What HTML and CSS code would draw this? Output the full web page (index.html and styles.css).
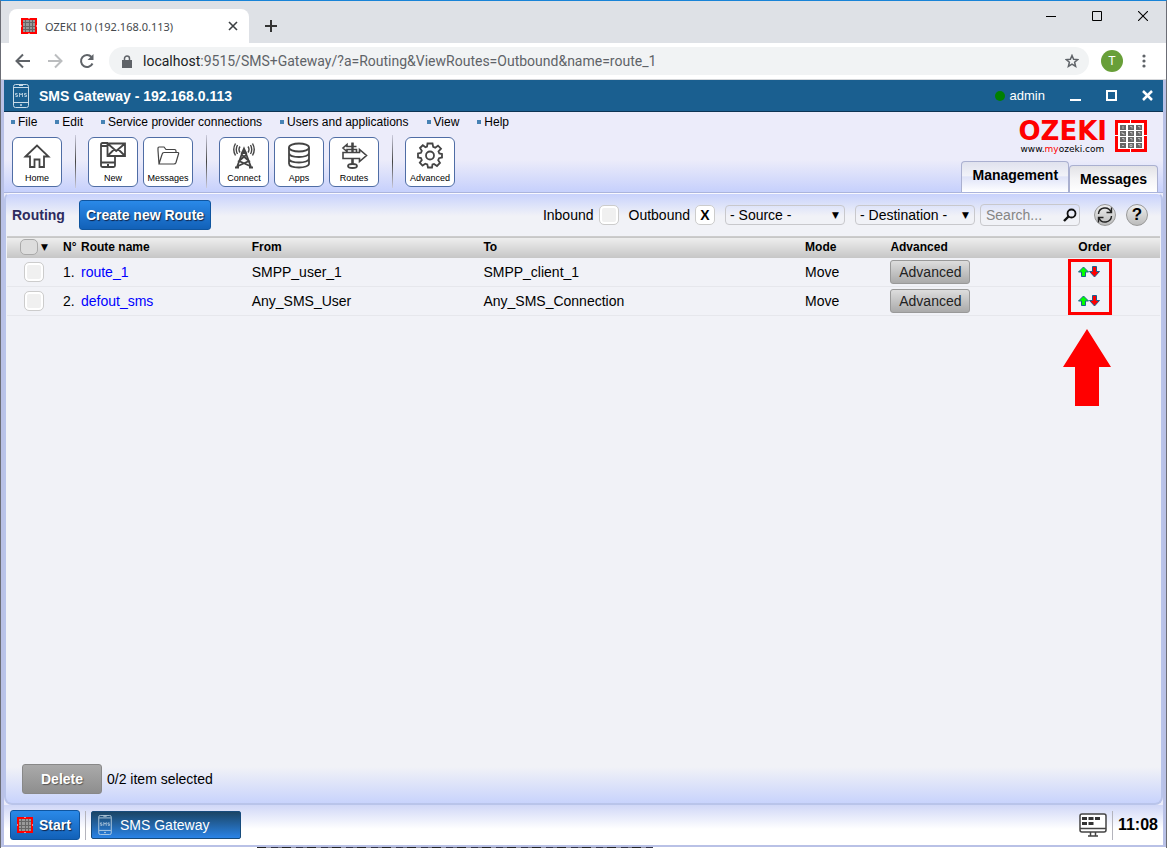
FILE: index.html
```
<!DOCTYPE html>
<html lang="en">
<head>
<meta charset="utf-8">
<title>OZEKI 10 (192.168.0.113)</title>
<link rel="stylesheet" href="styles.css">
</head>
<body>
<svg class="defs" aria-hidden="true">
  <symbol id="grid" viewBox="0 0 32 32">
    <path d="M0 0H32V32H0Z" fill="#fff"/>
    <path d="M0 0H15V3H3V15H0ZM16 0H32V15H29V3H16ZM0 16H3V29H15V32H0ZM29 16H32V32H16V29H29Z" fill="#f00"/>
    <path d="M5 5h6v5H5zM13 5h6v5h-6zM21 5h6v5h-6zM5 11h6v5H5zM13 11h6v5h-6zM21 11h6v5h-6zM5 17h6v5H5zM13 17h6v5h-6zM21 17h6v5h-6zM5 23h6v5H5zM13 23h6v5h-6zM21 23h6v5h-6z" fill="#666"/>
    <path d="M8 6v3M15 6.500h2v2M23 6.500h2v2M7 12v1.500h2v1.500M15 12.500h2v2M23 12.500h2v2M7 18.500h2v2M15 18.500h2v2M23 18.500h2v2M7 25.500h2M15 24.500h2v2h-2zM23 24.500h2v2" fill="none" stroke="#ccc" stroke-width=".8"/>
  </symbol>
  <symbol id="favicon" viewBox="0 0 16 16">
    <path d="M0 0H16V16H0Z" fill="#f00"/>
    <path d="M2 2H14V14H2Z" fill="#999"/>
    <path d="M8 0V1M8 15V16M0 8H1M15 8H16" stroke="#fff"/>
    <path d="M4.500 2V14M8.500 2V14M11.500 2V14M2 4.500H14M2 8.500H14M2 11.500H14" stroke="#666"/>
  </symbol>
  <symbol id="phone" viewBox="0 0 16 24">
    <rect x=".5" y=".5" width="15" height="23" rx="2" fill="none" stroke="#c8dbe8"/>
    <path d="M1 3.500H15M1 18.500H15M6 1.500h4" stroke="#c8dbe8"/>
    <path d="M4.500 9.500H2.500v1.500h2v1.500h-2M6.500 13v-4l1.500 2 1.500-2v4M13.500 9.500h-2v1.500h2v1.500h-2" fill="none" stroke="#c8dbe8" stroke-width=".8"/>
    <circle cx="8" cy="21" r="1" fill="#c8dbe8"/>
  </symbol>
  <symbol id="updown" viewBox="0 0 22 12">
    <path d="M5.500 1 10.500 6H7.500V10.500H3.500V6H.5Z" fill="#0f0" stroke="#1b5f91"/>
    <path d="M14.500 .5H18.500V5.500H21.500L16.500 11 11.500 5.500H14.500Z" fill="#f00" stroke="#1b5f91"/>
  </symbol>
</svg>

<div class="browser">
  <header class="tabstrip">
    <div class="tab">
      <svg class="i16"><use href="#favicon"/></svg>
      <span class="tab-title">OZEKI 10 (192.168.0.113)</span>
      <button class="bare" aria-label="Close tab"><svg width="10" height="10" viewBox="0 0 10 10"><path d="M1 1 9 9M9 1 1 9" stroke="#3c4043" stroke-width="1.600"/></svg></button>
    </div>
    <button class="bare newtab" aria-label="New tab"><svg width="12" height="12" viewBox="0 0 12 12"><path d="M6 0V12M0 6H12" stroke="#333" stroke-width="2"/></svg></button>
    <div class="wincontrols">
      <button class="bare" aria-label="Minimize"><svg width="10" height="10" viewBox="0 0 10 10"><path d="M0 5.500H10" stroke="#000"/></svg></button>
      <button class="bare" aria-label="Maximize"><svg width="10" height="10" viewBox="0 0 10 10"><path d="M.5 .5H9.500V9.500H.5Z" fill="none" stroke="#000"/></svg></button>
      <button class="bare" aria-label="Close"><svg width="10" height="10" viewBox="0 0 10 10"><path d="M0 0 10 10M10 0 0 10" stroke="#000" stroke-width="1.100"/></svg></button>
    </div>
  </header>

  <nav class="navbar">
    <button class="bare" aria-label="Back"><svg width="16" height="16" viewBox="0 0 16 16"><path d="M15 8H2M8 1.500 1.500 8 8 14.500" fill="none" stroke="#5f6368" stroke-width="2"/></svg></button>
    <button class="bare" aria-label="Forward"><svg width="16" height="16" viewBox="0 0 16 16"><path d="M1 8H14M8 1.500 14.500 8 8 14.500" fill="none" stroke="#bbbdbf" stroke-width="2"/></svg></button>
    <button class="bare" aria-label="Reload"><svg width="16" height="16" viewBox="0 0 16 16"><path d="M13.500 10.500A6 6 0 1 1 12.500 4" fill="none" stroke="#5f6368" stroke-width="2"/><path d="M14.500 1V7H8.500Z" fill="#5f6368"/></svg></button>
    <div class="address">
      <svg width="10" height="13" viewBox="0 0 10 13"><path d="M0 5h10v8H0z" fill="#5f6368"/><path d="M2.500 6V3.500a2.500 2.500 0 0 1 5 0V6" fill="none" stroke="#5f6368" stroke-width="1.500"/></svg>
      <span class="url"><b>localhost</b>:9515/SMS+Gateway/?a=Routing&amp;ViewRoutes=Outbound&amp;name=route_1</span>
      <button class="bare" aria-label="Bookmark"><svg width="14" height="14" viewBox="0 0 14 14"><path d="M7 1.500 8.600 5.300 12.800 5.600 9.600 8.300 10.600 12.400 7 10.200 3.400 12.400 4.400 8.300 1.200 5.600 5.400 5.300Z" fill="none" stroke="#5f6368" stroke-width="1.500"/></svg></button>
    </div>
    <button class="avatar">T</button>
    <button class="bare" aria-label="Menu"><svg width="4" height="14" viewBox="0 0 4 14"><g fill="#5f6368"><circle cx="2" cy="2" r="1.600"/><circle cx="2" cy="7" r="1.600"/><circle cx="2" cy="12" r="1.600"/></g></svg></button>
  </nav>

  <main class="app">
    <header class="titlebar">
      <svg class="i24"><use href="#phone"/></svg>
      <h1>SMS Gateway - 192.168.0.113</h1>
      <span class="user"><i class="dot"></i>admin</span>
      <button class="bare" aria-label="Minimize window"><svg width="11" height="11" viewBox="0 0 11 11"><path d="M0 10H11" stroke="#fff" stroke-width="2"/></svg></button>
      <button class="bare" aria-label="Maximize window"><svg width="11" height="11" viewBox="0 0 11 11"><path d="M1 1H10V10H1Z" fill="none" stroke="#fff" stroke-width="2"/></svg></button>
      <button class="bare" aria-label="Close window"><svg width="11" height="11" viewBox="0 0 11 11"><path d="M1 1 10 10M10 1 1 10" stroke="#fff" stroke-width="2.500"/></svg></button>
    </header>

    <section class="ribbon">
      <div class="ribbon-left">
        <nav class="menu">
          <a href="#">File</a><a href="#">Edit</a><a href="#">Service provider connections</a><a href="#">Users and applications</a><a href="#">View</a><a href="#">Help</a>
        </nav>
        <div class="tools">
          <button class="tool"><svg viewBox="0 0 28 28"><path d="M2.500 15.500 14 4.500 25.500 15.500H21V26H16.500V18.500H11.500V26H7V15.500Z"/></svg>Home</button>
          <i class="sep"></i>
          <button class="tool"><svg viewBox="0 0 28 28"><path d="M9 2H3.500Q2 2 2 3.500V24.500Q2 26 3.500 26H14.500Q16 26 16 24.500V16M2 5H8M2 21.500H16M8 24h2M8.500 2.500H26V15H8.500ZM8.500 2.500 17.200 10 26 2.500M8.500 15 15 8.500M26 15 19.500 8.500"/></svg>New</button>
          <button class="tool"><svg class="thin" viewBox="0 0 28 28"><path d="M5 23 4 9.500V7Q4 6 5 6H10L12 8.500H20.500Q22 8.500 22 10V11.500M5 23 8 13.500Q8.500 11.500 10 11.500H24Q25 11.500 24.500 13L22 21.500Q21.500 23 20 23H5Z"/></svg>Messages</button>
          <i class="sep"></i>
          <button class="tool"><svg viewBox="0 0 28 28"><path d="M13 10 7 26M15 10 21 26M5 26.500h4M19 26.500h4M12 14 19 20 8 25M16 14 9 20 20 25"/><path d="M14 7.500 16 12H12Z" fill="#444"/><path d="M10 5.500Q8 8.500 10 11.500M18 5.500Q20 8.500 18 11.500M7.500 4Q5 8.500 7.500 13M20.500 4Q23 8.500 20.500 13M5.500 2.500Q2 8.500 5.500 14.500M22.500 2.500Q26 8.500 22.500 14.500" stroke-width="1.400"/></svg>Connect</button>
          <button class="tool"><svg viewBox="0 0 28 28"><ellipse cx="14" cy="6.500" rx="10" ry="4"/><path d="M4 6.500V22.500C4 27.800 24 27.800 24 22.500V6.500M4 12C4 17.300 24 17.300 24 12M4 17.500C4 22.800 24 22.800 24 17.500"/></svg>Apps</button>
          <button class="tool"><svg viewBox="0 0 28 28"><path d="M12.500 2V5M12.500 18V23M16.500 11V8.500H7V10.500L3 7 7 3.500V5.500H16.500M3 11.500H19.500V8.500L26.500 14.500 19.500 20.500V17.500H3Z" stroke-width="1.600"/><path d="M12.500 1.500V11.500M12.500 17.500V24" stroke-width="2.400"/><ellipse cx="12.500" cy="25" rx="4.500" ry="2"/></svg>Routes</button>
          <i class="sep"></i>
          <button class="tool"><svg viewBox="0 0 28 28"><circle cx="14" cy="14.500" r="4"/><path d="M11.500 2.500H16.500L17.200 5.900 19.200 6.700 22 4.700 25 7.700 22.500 10.500 23.300 12.500 26 13V16.500L23 17.200 22.200 19.200 24 22 21 25 18 23 16.500 23.500 16 26.500H12L11.300 23.500 9.300 22.700 6.500 24.500 3.800 21.700 5.800 19 5 17 2 16.500V12.500L5 11.800 5.800 9.800 4 7 6.800 4.300 9.500 6.300 11 5.700Z"/></svg>Advanced</button>
        </div>
      </div>
      <div class="ribbon-right">
        <a class="logo" href="#"><span class="logo-text"><strong>OZEKI</strong><small>www.<em>my</em>ozeki.com</small></span><svg class="i32"><use href="#grid"/></svg></a>
        <div class="pagetabs"><button class="pagetab current">Management</button><button class="pagetab">Messages</button></div>
      </div>
    </section>

    <section class="panel">
      <form class="filters">
        <h2>Routing</h2>
        <button type="button" class="primary">Create new Route</button>
        <label class="check first">Inbound <input type="checkbox"></label>
        <label class="check">Outbound <input type="checkbox" checked></label>
        <label class="pick"><select aria-label="Source"><option>- Source -</option></select></label>
        <label class="pick"><select aria-label="Destination"><option>- Destination -</option></select></label>
        <label class="search"><input type="text" placeholder="Search..." aria-label="Search"><svg width="14" height="14" viewBox="0 0 14 14"><circle cx="8.500" cy="5.500" r="4" fill="none" stroke="#111" stroke-width="1.800"/><path d="M5.500 8.500 1 13" stroke="#111" stroke-width="2.400"/></svg></label>
        <button type="button" class="round" aria-label="Refresh"><svg width="18" height="18" viewBox="0 0 18 18"><path d="M2.500 8A6.500 6.500 0 0 1 15 6M15.500 10A6.500 6.500 0 0 1 3 12M15.500 1.500V6.500H10.500M2.500 16.500V11.500H7.500" fill="none" stroke="#222" stroke-width="1.400"/></svg></button>
        <button type="button" class="round">?</button>
      </form>

      <div class="listing">
        <table>
          <colgroup><col class="c-check"><col class="c-no"><col class="c-name"><col class="c-from"><col class="c-to"><col class="c-mode"><col class="c-adv"><col></colgroup>
          <thead><tr><th><span class="all"><input type="checkbox" class="flat" aria-label="Select all">▼</span></th><th>N°</th><th>Route name</th><th>From</th><th>To</th><th>Mode</th><th>Advanced</th><th>Order</th></tr></thead>
          <tbody>
            <tr><td class="pickrow"><input type="checkbox" aria-label="Select route_1"></td><td>1.</td><td><a href="#">route_1</a></td><td>SMPP_user_1</td><td>SMPP_client_1</td><td>Move</td><td><button class="grey">Advanced</button></td><td><button class="bare" aria-label="Change order"><svg width="22" height="12"><use href="#updown"/></svg></button></td></tr>
            <tr><td class="pickrow"><input type="checkbox" aria-label="Select defout_sms"></td><td>2.</td><td><a href="#">defout_sms</a></td><td>Any_SMS_User</td><td>Any_SMS_Connection</td><td>Move</td><td><button class="grey">Advanced</button></td><td><button class="bare" aria-label="Change order"><svg width="22" height="12"><use href="#updown"/></svg></button></td></tr>
          </tbody>
        </table>
        <div class="callout"><div class="frame"></div><svg width="48" height="77" viewBox="0 0 48 77"><path d="M24 0 48 38H36V77H12V38H0Z" fill="#f00"/></svg></div>
      </div>

      <footer class="actions"><button class="delete">Delete</button>0/2 item selected</footer>
    </section>

    <footer class="taskbar">
      <button class="start"><svg class="i16"><use href="#favicon"/></svg>Start</button>
      <i class="rule"></i>
      <button class="task"><svg width="14" height="20"><use href="#phone"/></svg>SMS Gateway</button>
      <svg class="monitor" width="28" height="24" viewBox="0 0 28 24"><rect x="1" y="1" width="26" height="18" rx="2" fill="#fff" stroke="#444" stroke-width="1.500"/><path d="M1 15.500H27M11.500 19v4M16.500 19v4M9 23H19" stroke="#444" stroke-width="1.500"/><path d="M3 4h5v3H3zM9.500 4h5v3h-5zM16 4h5v3h-5zM3 9h5v3H3zM9.500 9h5v3h-5z" fill="#333"/></svg>
      <i class="rule"></i>
      <time>11:08</time>
    </footer>
  </main>
  <div class="below"></div>
</div>
</body>
</html>
```
FILE: styles.css
```
* { box-sizing: border-box; }
body { margin: 0; font: 14px "Liberation Sans", Arial, sans-serif; color: #000; }
button, input, select { font: inherit; margin: 0; color: inherit; }
button { cursor: pointer; }
svg { display: block; flex: none; }
.defs { position: absolute; width: 0; height: 0; }
.bare { border: 0; background: none; padding: 0; display: flex; }
.i16 { width: 16px; height: 16px; }
.i24 { width: 16px; height: 24px; }
.i32 { width: 32px; height: 32px; }

.browser { min-height: 100vh; display: flex; flex-direction: column; border: 1px solid #6b6d75; border-top-color: #1883d7; border-bottom: 0; }

.tabstrip { height: 42px; background: #dee1e6; display: flex; align-items: center; padding-left: 8px; }
.tab { align-self: flex-end; width: 240px; height: 34px; background: #fff; border-radius: 8px 8px 0 0; display: flex; align-items: center; gap: 8px; padding: 0 11px 0 12px; }
.tab-title { flex: 1; font: 11px "Noto Sans", "Open Sans", sans-serif; color: #45494d; white-space: nowrap; }
.newtab { margin: 8px 0 0 16px; }
.wincontrols { margin-left: auto; display: flex; gap: 36px; padding: 0 18px 13px 0; }

.navbar { height: 37px; background: #fff; border-bottom: 1px solid #d5d7da; display: flex; align-items: center; padding: 0 20px 0 14px; gap: 16px; }
.address { flex: 1; height: 28px; border-radius: 14px; background: #f1f3f4; display: flex; align-items: center; gap: 11px; padding: 0 10px 0 13px; margin: 0 -4px 0 -2px; }
.url { flex: 1; font: 14px Roboto, "Open Sans", sans-serif; color: #5f6368; white-space: nowrap; }
.url b { font-weight: 400; color: #202124; }
.avatar { width: 22px; height: 22px; border: 0; border-radius: 50%; background: #689f38; color: #fff; padding: 0; font-size: 12px; margin-right: 3px; }

.app { flex: 1; display: flex; flex-direction: column; border: solid #b9c1e6; border-width: 0 3px 2px; background: #ebecfa; }
.titlebar { height: 32px; background: #1a5f90; border-bottom: 1px solid #0d3453; color: #fff; display: flex; align-items: center; padding: 0 10px 0 9px; gap: 25px; }
.titlebar h1 { margin: 0 auto 0 -15px; font-size: 14px; }
.user { display: flex; align-items: center; gap: 5px; font-size: 13px; }
.dot { width: 10px; height: 10px; border-radius: 50%; background: #008000; }

.ribbon { display: flex; justify-content: space-between; height: 81px; background: linear-gradient(#ececfa 0 60%, #c6d0fc); border-bottom: 1px solid #aab4dc; padding: 0 5px 0 7px; }
.menu { display: flex; gap: 18px; font-size: 12px; height: 19px; align-items: center; }
.menu a { color: #000; text-decoration: none; display: flex; align-items: center; gap: 3px; }
.menu a::before { content: ""; width: 4px; height: 4px; background: #4682b4; }
.tools { display: flex; gap: 5px; padding: 6px 0 0 1px; }
.tool { width: 50px; height: 50px; border: 1px solid #4f6da5; border-radius: 6px; background: #fff; padding: 3px 0 0; display: flex; flex-direction: column; align-items: center; gap: 3px; font-size: 9px; line-height: 12px; }
.tool svg { width: 28px; height: 28px; fill: none; stroke: #444; stroke-width: 1.8; }
.tool svg.thin { stroke-width: 1.2; }
.sep { width: 1px; height: 53px; margin: -2px 7px 0 8px; background: linear-gradient(#ccd 0, #444 50%, #ccd); }
.ribbon-right { display: flex; flex-direction: column; align-items: flex-end; justify-content: space-between; padding-top: 6px; }
.logo { display: flex; align-items: center; gap: 8px; text-decoration: none; color: #000; padding-right: 11px; height: 36px; }
.logo-text { display: flex; flex-direction: column; font-family: "DejaVu Sans", Verdana, sans-serif; }
.logo-text strong { color: #f00; font-size: 26px; line-height: 26px; }
.logo-text small { font-size: 9px; line-height: 10px; padding-left: 2px; }
.logo-text em { color: #f00; font-style: normal; }
.pagetabs { display: flex; align-items: flex-end; }
.pagetab { height: 27px; padding: 0 10px; font-weight: 700; border: 1px solid #aab0d0; border-bottom: 0; border-radius: 4px 4px 0 0; background: linear-gradient(#e2e2e6, #f4f4f6 50%, #fff); }
.pagetab.current { height: 31px; padding: 0 10px 4px; background: linear-gradient(#e0e2ee, #f1f2f8 45%, #dfe3f8 50%, #fff); }

.panel { flex: 1; display: flex; flex-direction: column; border: 2px solid #b9c4ea; border-top: 1px solid #f8f8fe; border-radius: 6px 6px 8px 8px; background: linear-gradient(#c8d2fc, #f1f2f7 22px, #f1f2f7 calc(100% - 36px), #c8d3fc); padding: 0 1px; }
.filters { height: 42px; display: flex; align-items: center; padding: 0 12px 0 5px; }
.filters h2 { margin: 0 14px 0 0; font-size: 14px; color: #2d2b60; }
.primary, .start { border: 1px solid #0f559f; border-radius: 3px; background: linear-gradient(#2a89e8, #1261b8); color: #fff; font-weight: 700; text-shadow: 1px 1px 1px #124; height: 30px; padding: 0 6px; }
.check { display: flex; align-items: center; gap: 5px; margin-right: 10px; }
.check.first { margin-left: auto; }
input[type="checkbox"] { appearance: none; width: 20px; height: 20px; border: 1px solid #ccc; border-radius: 5px; background: #f0f0f0; box-shadow: inset 0 0 0 2px #fff; display: grid; place-items: center; }
input[type="checkbox"]:checked { background: #fff; }
input[type="checkbox"]:checked::before { content: "X"; font-weight: 700; }
.pick { position: relative; margin-right: 10px; }
.pick::after { content: "▼"; font: 9px "DejaVu Sans", sans-serif; position: absolute; right: 6px; top: 5px; pointer-events: none; }
.pick select { appearance: none; display: block; width: 120px; height: 20px; border: 1px solid #c8c8cc; border-radius: 4px; background: none; padding: 0 4px; }
.search { width: 100px; height: 22px; border: 1px solid #c8c8cc; border-radius: 4px; display: flex; align-items: center; margin: 0 14px 0 -5px; padding: 0 2px 0 5px; }
.search input { flex: 1; min-width: 0; border: 0; padding: 0; background: none; outline: 0; }
.search input::placeholder { color: #858585; }
.round { width: 22px; height: 22px; border: 1px solid #999; border-radius: 50%; background: linear-gradient(#eee, #bbb); padding: 0; display: grid; place-items: center; font-weight: 700; font-size: 17px; line-height: 20px; }
.round + .round { margin-left: 10px; }

.listing { position: relative; flex: 1; }
table { width: 100%; border-collapse: collapse; table-layout: fixed; }
.c-check { width: 56px; }
.c-no { width: 18px; }
.c-name { width: 14.8%; }
.c-from { width: 20.1%; }
.c-to { width: 27.9%; }
.c-mode { width: 7.4%; }
.c-adv { width: 16.3%; }
th, td { padding: 0; text-align: left; white-space: nowrap; }
th { height: 21px; font-size: 12px; }
thead tr { background: linear-gradient(#eee, #c6c6c6); border-top: 1px solid #ccc; }
tbody tr { height: 29px; border-bottom: 1px solid #e6e7ec; }
tbody a { color: #00f; text-decoration: none; }
.all { display: flex; align-items: center; gap: 3px; padding-left: 13px; font: 9px "DejaVu Sans", sans-serif; }
input[type="checkbox"].flat { width: 18px; height: 16px; border-color: #aaa; background: #ddd; box-shadow: none; }
.pickrow { padding-left: 17px; }
.grey { display: block; width: 80px; height: 24px; padding: 0; border: 1px solid #999; border-radius: 3px; background: linear-gradient(#ddd, #aaa); color: #222; }
.callout { position: absolute; top: 23px; right: 48px; display: flex; flex-direction: column; align-items: flex-end; gap: 14px; pointer-events: none; }
.callout svg { margin-right: 1px; }
.frame { width: 44px; height: 56px; border: 3px solid #f00; }

.actions { display: flex; align-items: center; gap: 5px; padding: 0 15px 9px; }
.delete { width: 80px; height: 30px; border: 1px solid #888; border-radius: 3px; background: linear-gradient(#aaa, #8e8e8e); color: #fff; font-weight: 700; text-shadow: 1px 1px 1px #555; }

.taskbar { height: 40px; background: linear-gradient(#d0d7f7, #fff 24px); display: flex; align-items: center; gap: 5px; padding: 0 5px 0 6px; }
.start { display: flex; align-items: center; gap: 6px; width: 70px; }
.rule { width: 1px; height: 29px; background: #b4b4bc; }
.task { width: 150px; height: 28px; border: 1px solid #174b7c; border-radius: 2px; background: linear-gradient(#1b4565, #2a83e6); color: #fff; display: flex; align-items: center; gap: 8px; padding: 0 6px; }
.monitor { margin-left: auto; }
time { font-size: 16px; font-weight: 700; }
.below { height: 1px; margin: 0 44% 0 22%; background: repeating-linear-gradient(90deg, #222 0 9px, #99a 9px 14px, #334 14px 21px, #778 21px 25px); }
```
